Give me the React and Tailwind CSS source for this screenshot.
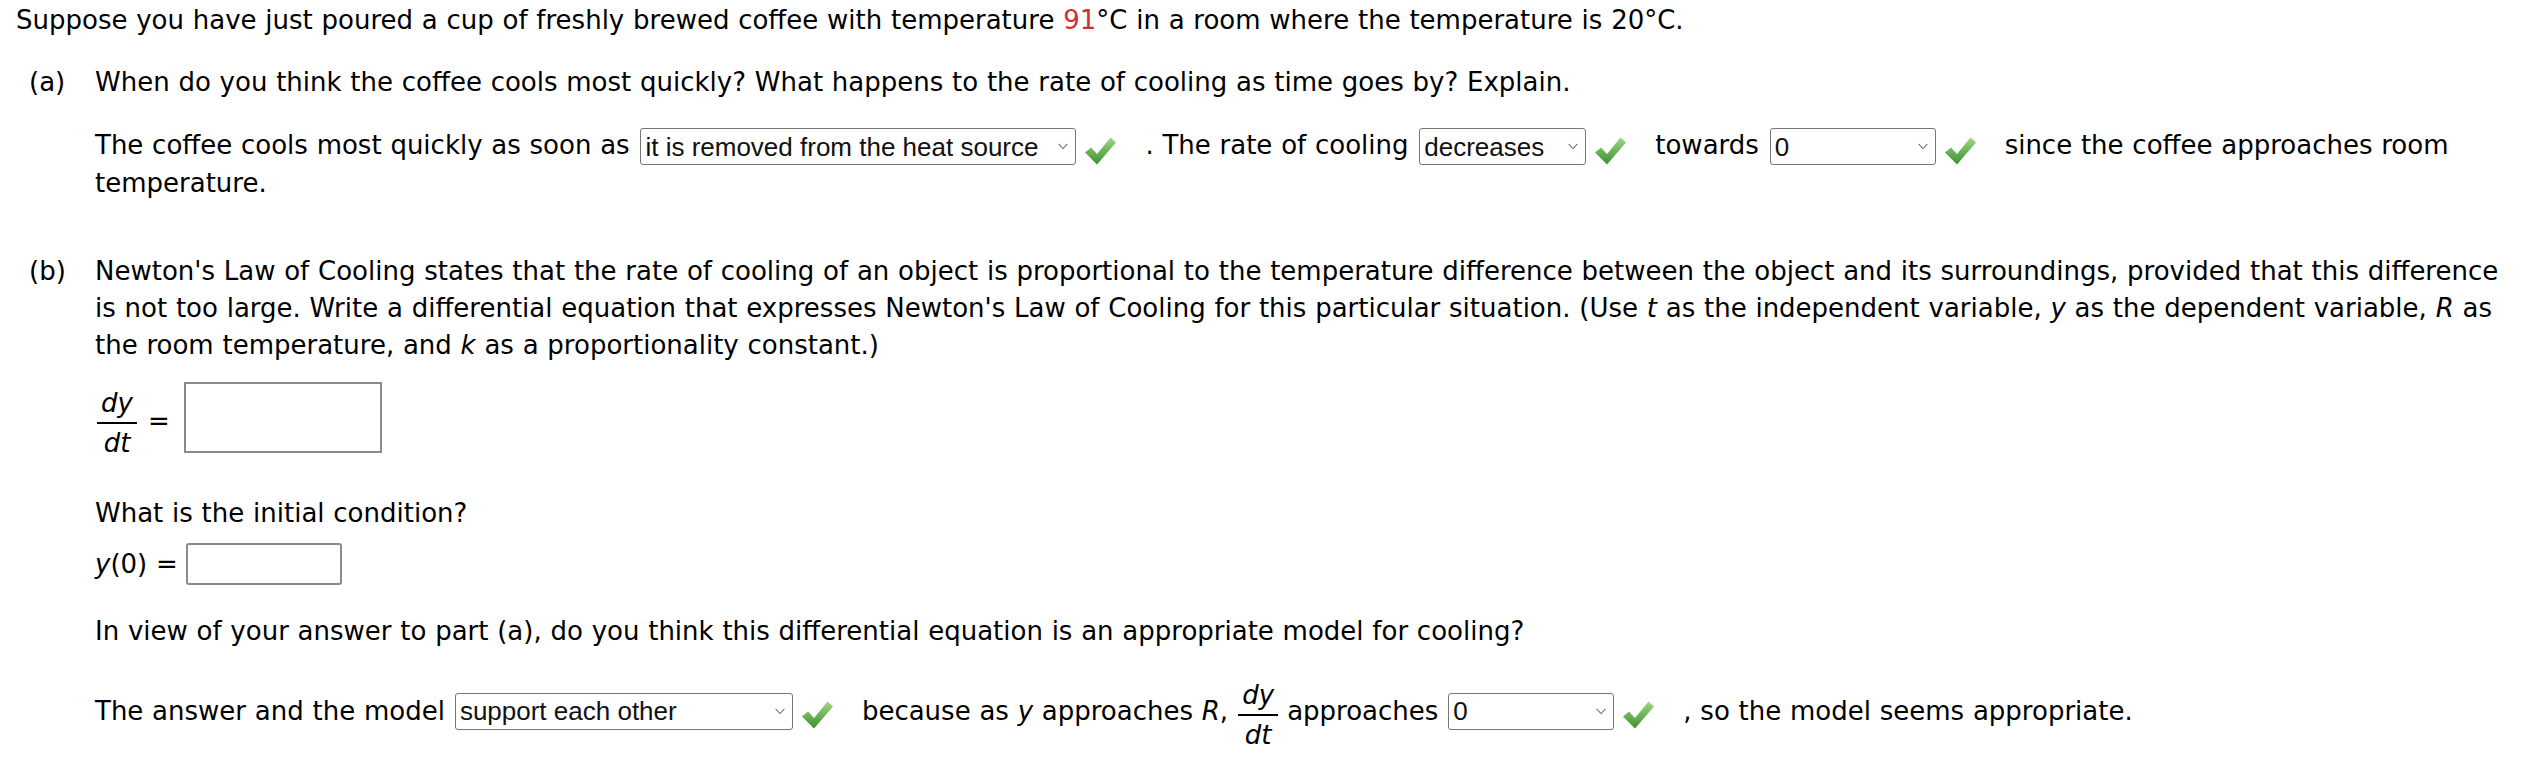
import clsx from "clsx";

function Check() {
  return (
    <svg
      viewBox="0 0 32 28"
      className="relative top-[4px] ml-[8px] mr-[28px] inline-block h-[28px] w-[33px] align-middle"
    >
      <defs>
        <linearGradient id="chk" x1="0" y1="0" x2="0" y2="1">
          <stop offset="0" stopColor="#9fd884" />
          <stop offset="1" stopColor="#3c8f34" />
        </linearGradient>
      </defs>
      <path d="M0.5 15.5 L6.5 10.5 L12.5 17 L26 0.5 L31.5 5.5 L12.5 27.5 Z" fill="url(#chk)" />
    </svg>
  );
}

function Pick({ value, width }) {
  return (
    <span
      className={clsx(
        "ml-[2px] inline-flex h-[37px] items-center justify-between whitespace-nowrap rounded-[3px] border border-[#767676] bg-white pl-[4px] pr-[6px] align-middle font-['Liberation_Sans',Arial,sans-serif] text-[26px] leading-none tracking-normal text-[#111] [word-spacing:0]",
        width
      )}
    >
      <span>{value}</span>
      <svg viewBox="0 0 12 8" className="ml-[6px] h-[7px] w-[12px] shrink-0">
        <path d="M1 1 L6 6.5 L11 1" fill="none" stroke="#333" strokeWidth="1.1" />
      </svg>
    </span>
  );
}

function Frac({ className }) {
  return (
    <span className={clsx("inline-flex w-[40px] flex-col items-center italic", className)}>
      <span className="leading-[32px]">dy</span>
      <span className="my-[3px] h-[2px] w-full bg-black" />
      <span className="leading-[32px]">dt</span>
    </span>
  );
}

export default function App() {
  return (
    <div className="min-h-screen bg-white font-['DejaVu_Sans',Verdana,sans-serif] text-[26px] leading-[37px] text-black [word-spacing:0.5px]">
      <p className="pl-4 pt-[2px]">
        Suppose you have just poured a cup of freshly brewed coffee with temperature{" "}
        <span className="text-[#d0312d]">91</span>°C in a room where the temperature is 20°C.
      </p>

      {/* part a */}
      <div className="mt-[25px] flex pl-[29px]">
        <div className="w-[66px] shrink-0">(a)</div>
        <div className="flex-1 pr-4">
          <p>
            When do you think the coffee cools most quickly? What happens to the rate of cooling as
            time goes by? Explain.
          </p>
          <p className="mt-[26px]">
            The coffee cools most quickly as soon as{" "}
            <Pick value="it is removed from the heat source" width="w-[436px]" />
            <Check />. The rate of cooling <Pick value="decreases" width="w-[167px]" />
            <Check />
            towards <Pick value="0" width="w-[166px]" />
            <Check />
            since the coffee approaches room
            <br />
            temperature.
          </p>
        </div>
      </div>

      {/* part b */}
      <div className="mt-[51px] flex pl-[29px]">
        <div className="w-[66px] shrink-0">(b)</div>
        <div className="flex-1">
          <p>
            Newton's Law of Cooling states that the rate of cooling of an object is proportional to
            the temperature difference between the object and its surroundings, provided that this
            difference
            <br />
            is not too large. Write a differential equation that expresses Newton's Law of Cooling
            for this particular situation. (Use <i>t</i> as the independent variable, <i>y</i> as
            the dependent variable, <i>R</i> as
            <br />
            the room temperature, and <i>k</i> as a proportionality constant.)
          </p>

          <div className="mt-[18px] flex h-[71px] items-center">
            <Frac className="mt-[10px] ml-[2px]" />
            <span className="ml-[11px] mt-[8px]">=</span>
            <span className="ml-[14px] h-[71px] w-[198px] border-2 border-[#8a8a8a] bg-white" />
          </div>

          <p className="mt-[42px]">What is the initial condition?</p>

          <div className="mt-[11px] flex h-[42px] items-center">
            <span>
              <i>y</i>(0) =
            </span>
            <span className="ml-[8px] h-[42px] w-[156px] rounded-[3px] border-2 border-[#8a8a8a] bg-white" />
          </div>

          <p className="mt-[28px]">
            In view of your answer to part (a), do you think this differential equation is an
            appropriate model for cooling?
          </p>

          <div className="mt-[24px] flex h-[74px] items-center">
            <span>The answer and the model</span>
            <span className="ml-[8px] flex items-center">
              <Pick value="support each other" width="w-[338px]" />
              <Check />
            </span>
            <span>
              because as <i>y</i> approaches <i>R</i>,
            </span>
            <Frac className="ml-[10px] mt-[8px]" />
            <span className="ml-[9px]">approaches</span>
            <span className="ml-[8px] flex items-center">
              <Pick value="0" width="w-[166px]" />
              <Check />
            </span>
            <span>, so the model seems appropriate.</span>
          </div>
        </div>
      </div>
    </div>
  );
}
